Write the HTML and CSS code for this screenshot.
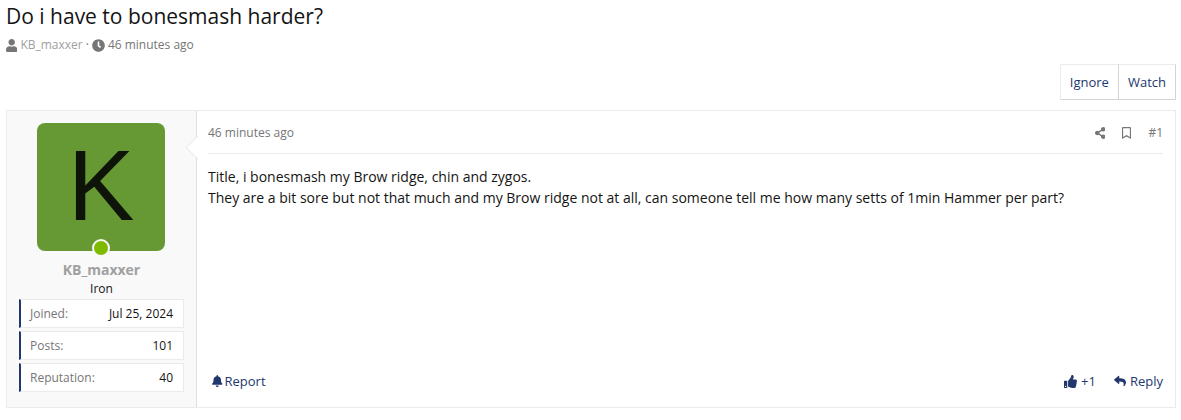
FILE: index.html
```html
<!DOCTYPE html>
<html lang="en">

<head>
    <meta charset="UTF-8">
    <title>Do i have to bonesmash harder?</title>
    <meta name="viewport" content="width=device-width, initial-scale=1.0">
    <link rel="stylesheet" href="styles.css">
</head>

<body>

    <header class="thread-header">
        <h1>Do i have to bonesmash harder?</h1>
        <div class="thread-meta">
            <svg class="icon icon-user" viewBox="0 0 448 512" aria-hidden="true"><path d="M224 256c70.7 0 128-57.3 128-128S294.7 0 224 0 96 57.3 96 128s57.3 128 128 128zm89.6 32h-16.7c-22.2 10.2-46.9 16-72.9 16s-50.6-5.8-72.9-16h-16.7C60.2 288 0 348.2 0 422.4V464c0 26.5 21.5 48 48 48h352c26.5 0 48-21.5 48-48v-41.6c0-74.2-60.2-134.4-134.4-134.4z"/></svg>
            <a href="#" class="username">KB_maxxer</a>
            <span>·</span>
            <svg class="icon icon-clock" viewBox="0 0 512 512" aria-hidden="true"><path d="M256,8C119,8,8,119,8,256S119,504,256,504,504,393,504,256,393,8,256,8Zm92.49,313h0l-20,25a16,16,0,0,1-22.49,2.5h0l-67-49.72a40,40,0,0,1-15-31.23V112a16,16,0,0,1,16-16h32a16,16,0,0,1,16,16V256l58,42.5A16,16,0,0,1,348.49,321Z"/></svg>
            <a href="#"><time>46 minutes ago</time></a>
        </div>
    </header>

    <div class="thread-actions">
        <button type="button">Ignore</button>
        <button type="button">Watch</button>
    </div>

    <article class="post">
        <aside class="post-user">
            <a href="#" class="avatar">K<span class="online"></span></a>
            <a href="#" class="user-name">KB_maxxer</a>
            <div class="user-title">Iron</div>
            <dl class="user-stats">
                <div class="stat">
                    <dt>Joined:</dt>
                    <dd>Jul 25, 2024</dd>
                </div>
                <div class="stat">
                    <dt>Posts:</dt>
                    <dd>101</dd>
                </div>
                <div class="stat">
                    <dt>Reputation:</dt>
                    <dd>40</dd>
                </div>
            </dl>
        </aside>

        <div class="post-main">
            <header class="post-header">
                <a href="#"><time>46 minutes ago</time></a>
                <div class="post-tools">
                    <a href="#" aria-label="Share"><svg class="icon icon-share" viewBox="0 0 448 512"><path d="M352 320c-22.608 0-43.387 7.819-59.79 20.895l-102.486-64.054a96.551 96.551 0 0 0 0-41.683l102.486-64.054C308.613 184.181 329.392 192 352 192c53.019 0 96-42.981 96-96S405.019 0 352 0s-96 42.981-96 96c0 7.158.79 14.13 2.276 20.841L155.79 180.895C139.387 167.819 118.608 160 96 160c-53.019 0-96 42.981-96 96s42.981 96 96 96c22.608 0 43.387-7.819 59.79-20.895l102.486 64.054A96.301 96.301 0 0 0 256 416c0 53.019 42.981 96 96 96s96-42.981 96-96-42.981-96-96-96z"/></svg></a>
                    <a href="#" aria-label="Bookmark"><svg class="icon icon-bookmark" viewBox="0 0 384 512"><path d="M336 0H48C21.49 0 0 21.49 0 48v464l192-112 192 112V48c0-26.51-21.49-48-48-48zm0 428.43l-144-84-144 84V54a6 6 0 0 1 6-6h276c3.314 0 6 2.683 6 5.996V428.43z"/></svg></a>
                    <a href="#">#1</a>
                </div>
            </header>

            <div class="post-body">
                Title, i bonesmash my Brow ridge, chin and zygos.<br>
                They are a bit sore but not that much and my Brow ridge not at all, can someone tell me how many setts of 1min Hammer per part?
            </div>

            <footer class="post-footer">
                <a href="#" class="report"><svg class="icon icon-bell" viewBox="0 0 448 512" aria-hidden="true"><path d="M224 512c35.32 0 63.97-28.65 63.97-64H160.03c0 35.35 28.65 64 63.97 64zm215.39-149.71c-19.32-20.76-55.47-51.99-55.47-154.29 0-77.7-54.48-139.9-127.94-155.16V32c0-17.67-14.32-32-31.98-32s-31.98 14.33-31.98 32v20.84C118.56 68.1 64.08 130.3 64.08 208c0 102.3-36.15 133.53-55.47 154.29-6 6.45-8.66 14.16-8.61 21.71.11 16.4 12.98 32 32.1 32h383.8c19.12 0 32-15.6 32.1-32 .05-7.55-2.61-15.27-8.61-21.71z"/></svg>Report</a>
                <div class="post-reactions">
                    <a href="#"><svg class="icon icon-thumb" viewBox="0 0 512 512" aria-hidden="true"><path d="M104 224H24c-13.255 0-24 10.745-24 24v240c0 13.255 10.745 24 24 24h80c13.255 0 24-10.745 24-24V248c0-13.255-10.745-24-24-24zM64 472c-13.255 0-24-10.745-24-24s10.745-24 24-24 24 10.745 24 24-10.745 24-24 24zM384 81.452c0 42.416-25.97 66.208-33.277 94.548h101.723c33.397 0 59.397 27.746 59.553 58.098.084 17.938-7.546 37.249-19.439 49.197l-.11.11c9.836 23.337 8.237 56.037-9.308 79.469 8.681 25.895-.069 57.704-16.382 74.757 4.298 17.598 2.244 32.575-6.148 44.632C440.202 511.587 389.616 512 346.839 512l-2.845-.001c-48.287-.017-87.806-17.598-119.56-31.725-15.957-7.099-36.821-15.887-52.651-16.178-6.54-.12-11.783-5.457-11.783-11.998v-213.77c0-3.2 1.282-6.271 3.558-8.521 39.614-39.144 56.648-80.587 89.117-113.111 14.804-14.832 20.188-37.236 25.393-58.902C282.515 39.293 291.817 0 312 0c24 0 72 8 72 81.452z"/></svg>+1</a>
                    <a href="#"><svg class="icon icon-reply" viewBox="0 0 512 512" aria-hidden="true"><path d="M8.309 189.836L184.313 37.851C199.719 24.546 224 35.347 224 56.015v80.053c160.629 1.839 288 34.032 288 186.258 0 61.441-39.581 122.309-83.333 154.132-13.653 9.931-33.111-2.533-28.077-18.631 45.344-145.012-21.507-183.51-176.59-185.742V360c0 20.7-24.3 31.453-39.687 18.164l-176.004-152c-11.071-9.562-11.086-26.753 0-36.328z"/></svg>Reply</a>
                </div>
            </footer>
        </div>
    </article>

</body>

</html>
```
FILE: styles.css
```css
* {
    box-sizing: border-box;
}

body {
    margin: 0;
    padding: 1px 5px 12px 6px;
    font-family: "Segoe UI", "Open Sans", "Noto Sans", sans-serif;
    font-size: 14px;
    line-height: 21px;
    color: #141414;
    background: #fff;
}

a {
    color: inherit;
    text-decoration: none;
}

.icon {
    display: block;
    flex: none;
    height: 12px;
    fill: currentColor;
}

/* thread title */

h1 {
    margin: 0;
    font-size: 21px;
    font-weight: 400;
    line-height: 30px;
}

.thread-meta {
    display: flex;
    align-items: center;
    gap: 3px;
    margin-top: 4px;
    font-size: 12px;
    line-height: 20px;
    color: #767676;
}

.thread-meta .username {
    color: #a0a0a0;
}

.icon-user,
.icon-clock {
    height: 13px;
}

.thread-actions {
    display: flex;
    justify-content: flex-end;
    margin: 9px 0 10px;
}

.thread-actions button {
    height: 36px;
    padding: 0 9px;
    border: 1px solid;
    border-color: #ebebeb #d3d3d3 #d3d3d3 #ebebeb;
    background: #fff;
    font-family: inherit;
    font-size: 13px;
    color: #23376f;
}

.thread-actions button + button {
    border-left: 0;
}

/* post */

.post {
    display: flex;
    min-height: 298px;
    border: 1px solid #ebebeb;
}

.post-user {
    flex: none;
    width: 190px;
    padding: 12px;
    border-right: 1px solid #dfdfdf;
    background: #f9f9f9;
    text-align: center;
}

.avatar {
    display: block;
    position: relative;
    width: 128px;
    height: 128px;
    margin: 0 18px;
    border-radius: 8px;
    background: #669933;
    color: #0f1408;
    font-family: "Liberation Sans", Arial, sans-serif;
    font-size: 100px;
    line-height: 124px;
}

.online {
    position: absolute;
    bottom: -6px;
    left: 55px;
    width: 18px;
    height: 18px;
    border: 2px solid #f9f9f9;
    border-radius: 50%;
    background: #7fb900;
}

.user-name {
    display: block;
    margin-top: 9px;
    font-weight: 700;
    line-height: 20px;
    color: #a0a0a0;
}

.user-title {
    font-size: 12px;
    line-height: 18px;
}

.user-stats {
    display: grid;
    gap: 3px;
    margin: 1px 0 0;
    font-size: 12px;
}

.stat {
    display: flex;
    justify-content: space-between;
    padding: 3px 10px 3px 9px;
    border: 1px solid #ebebeb;
    border-left: 2px solid #23376f;
    background: #fff;
}

.stat dt {
    color: #767676;
}

.stat dd {
    margin: 0;
}

.post-main {
    display: flex;
    flex: 1;
    flex-direction: column;
    position: relative;
    min-width: 0;
    padding: 11px 12px 14px 11px;
}

/* arrow pointing at the user cell */
.post-main::before {
    content: "";
    position: absolute;
    top: 28px;
    left: -8px;
    width: 16px;
    height: 16px;
    border: 1px solid #ebebeb;
    border-width: 0 0 1px 1px;
    background: linear-gradient(45deg, #fff 50%, transparent 50%);
    transform: rotate(45deg);
}

.post-header {
    display: flex;
    align-items: center;
    justify-content: space-between;
    padding-bottom: 10px;
    border-bottom: 1px solid #ebebeb;
    font-size: 12px;
    color: #767676;
}

.post-tools {
    display: flex;
    align-items: center;
    gap: 17px;
}

.post-body {
    flex: 1;
    padding-top: 12px;
}

.post-footer,
.post-footer a {
    display: flex;
    align-items: center;
}

.post-footer {
    justify-content: space-between;
    padding-left: 4px;
    font-size: 13px;
    line-height: 24px;
    color: #23376f;
}

.post-footer .report {
    gap: 2px;
}

.post-reactions {
    display: flex;
    gap: 18px;
}

.post-reactions a {
    gap: 4px;
}

.icon-thumb {
    height: 13px;
}
```
